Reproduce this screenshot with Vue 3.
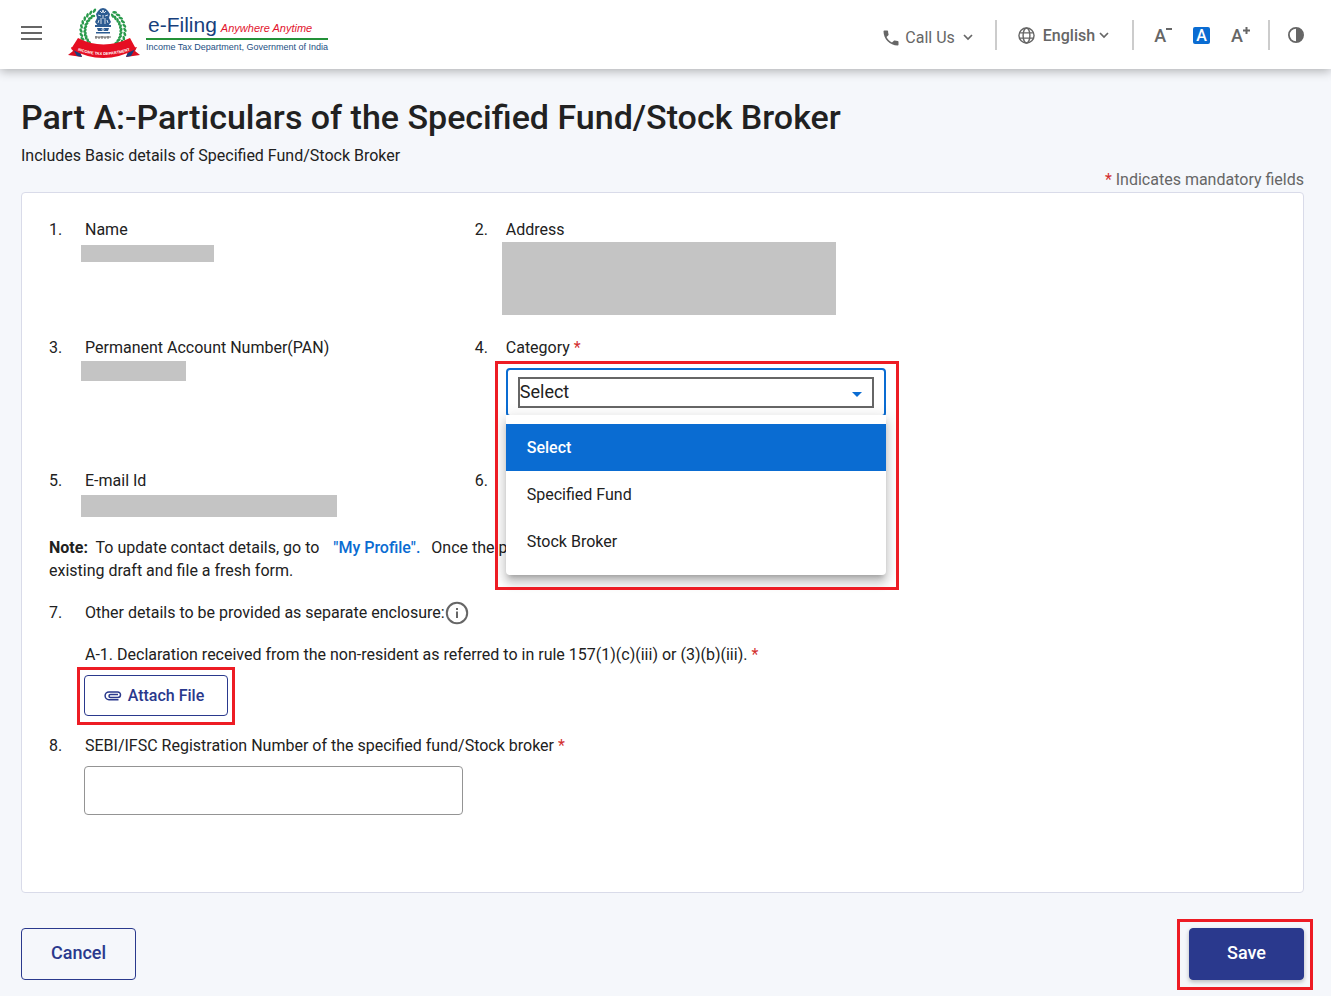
<script setup>
import { ref } from 'vue'

const options = ['Select', 'Specified Fund', 'Stock Broker']
const category = ref('Select')
const menuOpen = ref(true)
const registration = ref('')

/** Leaves around the emblem, two rows on each side */
const leaves = []
for (let a = -52; a <= 232; a += 11) {
  const rad = (a * Math.PI) / 180
  leaves.push({ x: 36 + 22 * Math.cos(rad), y: 25 - 22 * Math.sin(rad), turn: 60 - a })
  leaves.push({ x: 36 + 18 * Math.cos(rad), y: 25 - 18 * Math.sin(rad), turn: 120 - a })
}
const wreath = leaves.filter(l => Math.abs(l.x - 36) > 8)

function pick(option) {
  category.value = option
  menuOpen.value = false
}
</script>

<template>
<div class="page">
  <header class="topbar">
    <button class="icon-btn menu-btn" type="button" aria-label="Menu">
      <svg width="22" height="14" viewBox="0 0 22 14"><path d="M0 1h21M0 7h21M0 13h21" stroke="#666" stroke-width="2" /></svg>
    </button>

    <a class="brand" href="#">
      <svg class="emblem" width="74" height="54" viewBox="0 0 74 54">
        <g fill="#2a9a4c">
          <ellipse v-for="(l, i) in wreath" :key="i" :cx="l.x" :cy="l.y" rx="2.4" ry="1.3" :transform="`rotate(${l.turn} ${l.x} ${l.y})`" />
        </g>
        <g fill="#2d5c92">
          <path d="M31 5q2-3 5-3t5 3l2 3-1 4 2 4-3 4h-10l-3-4 2-4-1-4z" />
          <path d="M28 19h16v2H28zM30 22h12l-1 3h-10zM29 26h14v1.500H29z" />
        </g>
        <g stroke="#fff" stroke-width=".8" fill="none">
          <path d="M33 5l2 2 1-3 1 3 2-2M31 9l3 1M38 10l3-1M34 12v6M38 12v6M32 14l-1 3M40 14l1 3M36 9v4" />
          <circle cx="36" cy="23.500" r="1" />
        </g>
        <path d="M28 31h16M29 30v3M32 31v2M35 30v3M38 31v2M41 30v3" stroke="#555" stroke-width=".9" />
        <path d="M1 49l5-4-2-4 8 2 3 8zM73 49l-5-4 2-4-8 2-3 8z" fill="#d90d20" />
        <path d="M6 43l6 1 3 7-5-1zM68 43l-6 1-3 7 5-1z" fill="#173f7c" />
        <path d="M11 32Q36 45 63 32L69 43Q36 61 4 43z" fill="#e60e22" />
        <path id="ribbon-line" d="M7 43Q36 55 67 43" fill="none" />
        <text class="ribbon-text"><textPath href="#ribbon-line" startOffset="50%" text-anchor="middle">INCOME TAX DEPARTMENT</textPath></text>
      </svg>
      <span class="brand-text">
        <span class="brand-top">
          <span class="brand-name">e-Filing</span>
          <span class="brand-tag">Anywhere Anytime</span>
        </span>
        <span class="brand-dept">Income Tax Department, Government of India</span>
      </span>
    </a>

    <div class="tools">
      <button class="tool call" type="button">
        <svg width="20" height="20" viewBox="0 0 24 24"><path fill="#666" d="M6.620 10.790c1.440 2.830 3.760 5.140 6.590 6.590l2.200-2.200c.270-.270.670-.360 1.020-.240 1.120.370 2.330.570 3.570.570.550 0 1 .450 1 1V20c0 .550-.450 1-1 1-9.390 0-17-7.610-17-17 0-.550.450-1 1-1h3.500c.550 0 1 .450 1 1 0 1.250.2 2.450.570 3.570.110.350.030.740-.250 1.020z" /></svg>
        <span>Call Us</span>
        <svg class="chev" width="10" height="7" viewBox="0 0 10 7"><path d="M1 1l4 4 4-4" fill="none" stroke="#666" stroke-width="1.700" /></svg>
      </button>
      <button class="tool lang" type="button">
        <svg width="17" height="17" viewBox="0 0 18 18" fill="none" stroke="#666" stroke-width="1.500"><circle cx="9" cy="9" r="8" /><ellipse cx="9" cy="9" rx="3.600" ry="8" /><path d="M1.500 6.200h15M1.500 11.800h15" /></svg>
        <span>English</span>
        <svg class="chev" width="10" height="7" viewBox="0 0 10 7"><path d="M1 1l4 4 4-4" fill="none" stroke="#666" stroke-width="1.700" /></svg>
      </button>
      <div class="sizes">
        <button class="size" type="button" aria-label="Decrease text size">A<svg width="6" height="12" viewBox="0 0 6 12"><path d="M0 2h6" stroke="#666" stroke-width="2" /></svg></button>
        <button class="size active" type="button" aria-label="Normal text size">A</button>
        <button class="size" type="button" aria-label="Increase text size">A<svg width="7" height="12" viewBox="0 0 7 12"><path d="M0 3.500h7M3.500 0v7" stroke="#666" stroke-width="2" /></svg></button>
      </div>
      <button class="icon-btn contrast" type="button" aria-label="Contrast">
        <svg width="16" height="16" viewBox="0 0 16 16"><circle cx="8" cy="8" r="7.100" fill="none" stroke="#666" stroke-width="1.800" /><path d="M8 1a7 7 0 0 1 0 14z" fill="#666" /></svg>
      </button>
    </div>
  </header>

  <main class="content">
    <h1>Part A:-Particulars of the Specified Fund/Stock Broker</h1>
    <p class="subtitle">Includes Basic details of Specified Fund/Stock Broker</p>
    <p class="mandatory"><span class="req">*</span> Indicates mandatory fields</p>

    <section class="card">
      <div class="fields">
        <div class="field">
          <span class="num">1.</span>
          <div class="body">Name<div class="hidden-value name"></div></div>
        </div>
        <div class="field second">
          <span class="num">2.</span>
          <div class="body">Address<div class="hidden-value address"></div></div>
        </div>
        <div class="field first">
          <span class="num">3.</span>
          <div class="body">Permanent Account Number(PAN)<div class="hidden-value pan"></div></div>
        </div>
        <div class="field second">
          <span class="num">4.</span>
          <div class="body">
            <label for="category">Category <span class="req">*</span></label>
            <!-- Category picker with its open list -->
            <div class="picker">
              <select id="category" v-model="category" @mousedown.prevent="menuOpen = !menuOpen">
                <option v-for="o in options" :key="o">{{ o }}</option>
              </select>
              <svg class="caret" width="10" height="5" viewBox="0 0 10 5"><path d="M0 0h10L5 5z" fill="#0a6cd2" /></svg>
              <ul v-if="menuOpen" class="menu" role="listbox" aria-label="Category">
                <li v-for="o in options" :key="o" role="option" :aria-selected="o === category" :class="{ selected: o === category }" @click="pick(o)">{{ o }}</li>
              </ul>
              <div class="frame frame-picker"></div>
            </div>
          </div>
        </div>
        <div class="field first">
          <span class="num">5.</span>
          <div class="body">E-mail Id<div class="hidden-value email"></div></div>
        </div>
        <div class="field second">
          <span class="num">6.</span>
        </div>
      </div>

      <p class="note">
        <b>Note:</b>&nbsp; To update contact details, go to &nbsp;<a href="#">"My Profile".</a>&nbsp; Once the p<br>
        existing draft and file a fresh form.
      </p>

      <div class="field enclosure">
        <span class="num">7.</span>
        <div class="body">
          <div class="with-info">
            Other details to be provided as separate enclosure:
            <svg width="24" height="24" viewBox="0 0 24 24"><circle cx="12" cy="12" r="10.200" fill="none" stroke="#666" stroke-width="2" /><path d="M12 10.500v6.500M12 7v2" stroke="#666" stroke-width="2" /></svg>
          </div>
          <p class="declaration">A-1. Declaration received from the non-resident as referred to in rule 157(1)(c)(iii) or (3)(b)(iii). <span class="req">*</span></p>
          <div class="attach-wrap">
            <button class="btn attach" type="button">
              <svg width="18" height="10" viewBox="0 0 18 10" fill="none" stroke="#2a398d" stroke-width="1.500"><path d="M14.500 8.700H5A3.900 3.900 0 0 1 5 .9h8.700a2.800 2.800 0 0 1 0 5.600H6.500a1.500 1.500 0 0 1 0-3h7.500" /></svg>
              Attach File
            </button>
            <div class="frame"></div>
          </div>
        </div>
      </div>

      <div class="field registration">
        <span class="num">8.</span>
        <div class="body">
          <label for="registration">SEBI/IFSC Registration Number of the specified fund/Stock broker <span class="req">*</span></label>
          <input id="registration" v-model="registration" type="text">
        </div>
      </div>
    </section>

    <div class="actions">
      <button class="btn cancel" type="button">Cancel</button>
      <div class="save-wrap">
        <button class="btn save" type="button">Save</button>
        <div class="frame frame-save"></div>
      </div>
    </div>
  </main>
</div>
</template>

<style>
body {
  background: #f5f7fb;
}
</style>

<style scoped>
.page {
  font-family: Roboto, "Liberation Sans", sans-serif;
  font-size: 16px;
  line-height: 24px;
  color: #212121;
}

.page *,
.page *::before {
  box-sizing: border-box;
}

button {
  font: inherit;
  cursor: pointer;
}

/* Top bar */
.topbar {
  display: flex;
  align-items: flex-start;
  height: 69px;
  padding: 0 27px 0 21px;
  background: #fff;
  box-shadow: 0 2px 10px rgba(0, 0, 0, 0.3);
}

.icon-btn {
  display: flex;
  padding: 0;
  border: 0;
  background: none;
}

.menu-btn {
  margin: 26px 24px 0 0;
}

.brand {
  display: flex;
  gap: 5px;
  padding-top: 6px;
  text-decoration: none;
}

.ribbon-text {
  font: bold 4px "Liberation Sans", sans-serif;
  fill: #fff;
}

.brand-text {
  display: flex;
  flex-direction: column;
  padding-top: 6px;
  font-family: "Liberation Sans", sans-serif;
}

.brand-top {
  display: flex;
  align-items: baseline;
  gap: 4px;
  height: 28px;
  padding-left: 2px;
  border-bottom: 2px solid #239138;
}

.brand-name {
  font-size: 21px;
  line-height: 26px;
  color: #173f7c;
}

.brand-tag {
  font-size: 11px;
  font-style: italic;
  color: #e2142d;
}

.brand-dept {
  font-size: 9px;
  line-height: 15px;
  color: #1d4f83;
  white-space: nowrap;
}

.tools {
  display: flex;
  margin-left: auto;
  padding-top: 20px;
  color: #666;
}

.tool {
  display: flex;
  align-items: center;
  height: 30px;
  border: 0;
  background: none;
  color: #666;
}

.call {
  gap: 4px;
  padding: 5px 22px 0 0;
}

.call .chev {
  margin-left: 4px;
}

.lang {
  gap: 8px;
  padding: 1px 23px 0 21px;
  border-left: 2px solid #ccc;
  font-weight: 500;
}

.lang .chev {
  margin-left: -4px;
}

.sizes {
  display: flex;
  align-items: center;
  gap: 21px;
  height: 30px;
  padding: 1px 18px 0 20px;
  border-left: 2px solid #ccc;
  border-right: 2px solid #ccc;
}

.size {
  display: flex;
  padding: 0;
  border: 0;
  background: none;
  font-size: 18px;
  line-height: 18px;
  font-weight: 500;
  color: #666;
}

.size.active {
  justify-content: center;
  width: 17px;
  border-radius: 2px;
  background: #0a6cd2;
  font-size: 16px;
  line-height: 17px;
  color: #fff;
}

.contrast {
  margin: 7px 0 0 18px;
}

/* Heading */
.content {
  padding: 28px 27px 16px 21px;
}

h1 {
  margin: 0;
  font-size: 34px;
  line-height: 40px;
  font-weight: 500;
}

.subtitle,
.mandatory {
  margin: 0;
}

.subtitle {
  margin-top: 7px;
}

.mandatory {
  text-align: right;
  color: #666;
}

.req {
  color: #d32f2f;
}

/* Form */
.card {
  padding: 25px 27px 77px;
  border: 1px solid #d9dbe9;
  border-radius: 4px;
  background: #fff;
}

.fields {
  display: grid;
  grid-template-columns: 34.7% 33.5% 1fr;
  grid-template-rows: minmax(118px, auto) minmax(133px, auto) minmax(67px, auto);
}

.field {
  display: flex;
}

.field.first {
  grid-column: 1;
}

.num {
  flex: 0 0 36px;
}

.second .num {
  flex-basis: 31px;
}

.body {
  flex: 1;
  min-width: 0;
}

.hidden-value {
  margin-left: -4px;
  background: #c4c4c4;
}

.name {
  width: 133px;
  height: 17px;
  margin-top: 3px;
}

.address {
  width: 334px;
  height: 73px;
}

.pan {
  width: 105px;
  height: 20px;
  margin-top: 1px;
}

.email {
  width: 256px;
  height: 22px;
  margin-top: 2px;
}

.picker {
  position: relative;
  height: 49px;
  margin-top: 8px;
  padding: 7px 10px;
  border: 2px solid #0a6cd2;
  border-radius: 4px;
}

.picker select {
  display: block;
  width: 100%;
  height: 31px;
  padding: 0 0 2px;
  border: 2px solid #666;
  border-radius: 0;
  outline: none;
  appearance: none;
  background: #fff;
  font: inherit;
  font-size: 18px;
  color: #212121;
}

.caret {
  position: absolute;
  top: 22px;
  right: 22px;
  pointer-events: none;
}

.menu {
  position: absolute;
  z-index: 1;
  top: 45px;
  left: -2px;
  right: -2px;
  margin: 0;
  padding: 9px 0 10px;
  border-radius: 0 0 4px 4px;
  background: #fff;
  box-shadow: 0 5px 5px -3px rgba(0, 0, 0, 0.2), 0 8px 10px 1px rgba(0, 0, 0, 0.14), 0 3px 14px 2px rgba(0, 0, 0, 0.12);
  list-style: none;
}

.menu li {
  padding: 0 21px;
  line-height: 47px;
  cursor: pointer;
}

.menu li.selected {
  background: #0a6cd2;
  font-weight: 500;
  color: #fff;
}

/* Red frames around the parts to fill in */
.frame {
  position: absolute;
  z-index: 2;
  inset: -8px -7px -9px;
  border: 3px solid #ed1c24;
  pointer-events: none;
}

.frame-picker {
  inset: -9px -15px auto -13px;
  height: 229px;
}

.frame-save {
  inset: -9px -9px -10px -12px;
}

.note {
  margin: 0;
  line-height: 23px;
}

.note a {
  margin: 0 3px 0 6px;
  font-weight: 500;
  color: #0a6cd2;
  text-decoration: none;
}

.enclosure {
  margin-top: 19px;
}

.with-info {
  display: flex;
}

.declaration {
  margin: 18px 0 8px;
}

.attach-wrap,
.save-wrap {
  position: relative;
  width: fit-content;
}

.attach-wrap {
  margin-left: -1px;
}

.btn {
  display: flex;
  align-items: center;
  justify-content: center;
  border: 1px solid #2a398d;
  border-radius: 4px;
  background: none;
  font-weight: 500;
  color: #2a398d;
}

.attach {
  gap: 6px;
  width: 144px;
  height: 41px;
  padding: 0 10px 0 6px;
  background: #fff;
}

.registration {
  margin-top: 18px;
}

.registration input {
  display: block;
  width: 379px;
  height: 49px;
  margin: 8px 0 0 -1px;
  padding: 0 12px;
  border: 1px solid #949494;
  border-radius: 4px;
  font: inherit;
}

.actions {
  display: flex;
  justify-content: space-between;
  margin-top: 35px;
}

.cancel,
.save {
  width: 115px;
  height: 52px;
  padding: 0 6px 2px;
  font-size: 18px;
}

.save {
  background: #2a398d;
  color: #fff;
  box-shadow: 0 2px 4px rgba(0, 0, 0, 0.25);
}
</style>
